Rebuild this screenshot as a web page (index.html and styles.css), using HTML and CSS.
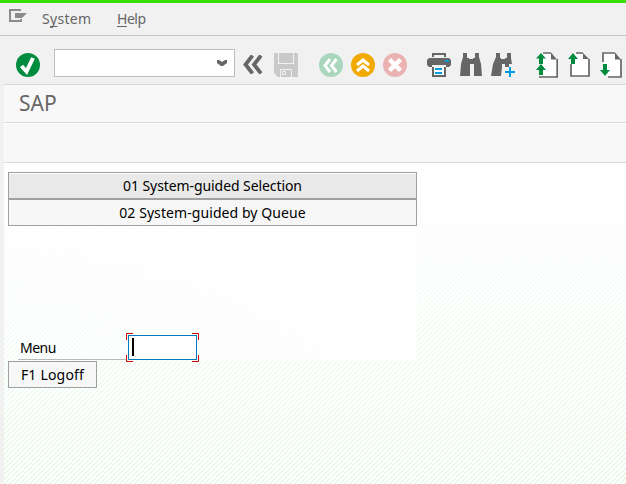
FILE: index.html
```html
<!DOCTYPE html>
<html lang="en">
<head>
<meta charset="utf-8">
<title>SAP</title>
<link rel="stylesheet" href="styles.css">
</head>
<body>
<nav class="menubar">
  <svg class="menu-icon" width="18" height="14" viewBox="0 0 18 14"><path d="M12 1H1v11h11v-2" fill="none" stroke="#8b8b8b" stroke-width="2"/><path d="M6 4h12l-5 5H6z" fill="#8b8b8b"/></svg>
  <span class="system">S<u>y</u>stem</span>
  <span class="help"><u>H</u>elp</span>
</nav>
<main class="window">
  <div class="toolbar">
    <svg class="check" width="24" height="24" viewBox="0 0 24 24"><circle cx="12" cy="12" r="12" fill="#008c3e"/><path d="M5.500 13l5 5.500L17 5" fill="none" stroke="#fff" stroke-width="4"/></svg>
    <div class="command"><svg width="10" height="7" viewBox="0 0 10 7"><path d="M0 0h2l3 2 3-2h2v3L6 6H4L0 3z" fill="#666"/></svg></div>
    <svg class="back" width="20" height="19" viewBox="0 0 20 19"><path d="M9.500 .5L2.500 9.500l7 9M18 .5l-7 9 7 9" fill="none" stroke="#666" stroke-width="3.800"/></svg>
    <svg class="save" width="24" height="24" viewBox="0 0 24 24"><path d="M0 0h4v11h16V0h4v24H4l-4-4z" fill="#c9c9c9"/><path d="M5 0h14v10H5z" fill="#c9c9c9"/><path d="M4.500 0v10.500h15V0M6.500 24v-7.500h11V24" fill="none" stroke="#f1f1f1"/><path d="M8.500 18.500h3v3h-3z" fill="none" stroke="#f1f1f1"/></svg>
    <svg class="exit" width="24" height="24" viewBox="0 0 24 24"><circle cx="12" cy="12" r="12" fill="#a9d6bc"/><path d="M11 6l-5 6.500 5 6.500M17.500 6l-5 6.500 5 6.500" fill="none" stroke="#fff" stroke-width="3"/></svg>
    <svg class="up" width="24" height="24" viewBox="0 0 24 24"><circle cx="12" cy="12" r="12" fill="#f2aa00"/><path d="M6 12l6-5 6 5M6 18l6-5 6 5" fill="none" stroke="#fff" stroke-width="3"/></svg>
    <svg class="cancel" width="24" height="24" viewBox="0 0 24 24"><circle cx="12" cy="12" r="12" fill="#ebb2b2"/><path d="M6.500 6.500l11 11M17.500 6.500l-11 11" stroke="#fff" stroke-width="4.500"/></svg>
    <svg class="print" width="24" height="24" viewBox="0 0 24 24"><path d="M5 4V0h14v4h-2V2H7v2zM2 5h20l2 2v5l-2 2h-3v-2H5v2H2l-2-2V7z" fill="#666"/><path d="M6 14v9h12v-9" fill="#fff" stroke="#666" stroke-width="2"/><path d="M18 7h4v2h-4zM8 15h7v2H8zM8 19h7v2H8z" fill="#009de0"/></svg>
    <svg class="find" width="24" height="24" viewBox="0 0 24 24"><path d="M4 0h4v5h2v1h4V5h2V0h4v4l2 7 1 12h-8V11h-4v12H1l1-12 2-7z" fill="#666"/></svg>
    <svg class="next" width="24" height="26" viewBox="0 0 24 26"><path d="M5 0h4v5h1v1h4V5h2V0h4v5l1 6h-3v3h-4v-3h-3v3l-1 9H0l2-12 3-7z" fill="#666"/><path d="M14 19h10M19 14v10" stroke="#009de0" stroke-width="2"/></svg>
    <svg class="first" width="22" height="26" viewBox="0 0 22 26"><path d="M6 1h9l6 6v17H6z" fill="#fff"/><path d="M7 1h8M21.200 7v18H3" fill="none" stroke="#666" stroke-width="1.700"/><path d="M15 .5l6 7h-6z" fill="#666"/><path d="M5 1L0 6.500h3V12h4V6.500h3zM5 12l-5 6h3v5h4v-5h3z" fill="#008c3e"/></svg>
    <svg class="page-up" width="22" height="26" viewBox="0 0 22 26"><path d="M4 2h11l6 6v16H4z" fill="#fff"/><path d="M8 1h7M21 7v17H3V12" fill="none" stroke="#666" stroke-width="1.700"/><path d="M15 1l6 6h-6z" fill="#666"/><path d="M5 1L0 7h3v5h4V7h3z" fill="#008c3e"/></svg>
    <svg class="page-down" width="22" height="26" viewBox="0 0 22 26"><path d="M3 1h12l6 6v17H3z" fill="#fff"/><path d="M3 10V1h12M21 7v18H8" fill="none" stroke="#666" stroke-width="1.700"/><path d="M15 .5l6 7h-6z" fill="#666"/><path d="M3 12h4v6h3l-5 6-5-6h3z" fill="#008c3e"/></svg>
  </div>
  <h1 class="title">SAP</h1>
  <div class="appbar"></div>
  <section class="screen">
    <div class="panel">
      <button class="option selected">01 System-guided Selection</button>
      <button class="option queue">02 System-guided by Queue</button>
      <div class="field-row">
        <label class="label" for="menu">Menu</label>
        <div class="field"><input id="menu" type="text"><i class="caret"></i>
          <svg class="corners" width="73" height="29" viewBox="0 0 73 29"><path d="M.5 7V.5H7M66 .5h6.500V7M72.500 22v6.500H66M7 28.500H.5V22" fill="none" stroke="#d40000"/></svg>
        </div>
      </div>
    </div>
    <button class="logoff">F1 Logoff</button>
  </section>
</main>
</body>
</html>
```
FILE: styles.css
```css
* { box-sizing: border-box; }
body {
  margin: 0;
  width: 626px;
  height: 484px;
  overflow: hidden;
  background: #f1f1f1;
  font: 14px "Noto Sans", "DejaVu Sans Condensed", sans-serif;
  color: #000;
}
svg { display: block; flex: none; }
button { font: inherit; color: #000; border: 1px solid #a0a0a0; border-radius: 0; }
.menubar {
  display: flex;
  height: 36px;
  border-top: 3px solid #37e100;
  border-bottom: 1px solid #c4c4c4;
  color: #666;
  line-height: 31px;
}
.menubar u { text-underline-offset: 2px; text-decoration-thickness: 1px; text-decoration-skip-ink: none; }
.menu-icon { margin: 6px 0 0 9px; }
.system { margin-left: 15px; width: 75px; letter-spacing: .3px; }
.help { letter-spacing: -.5px; }
.window { margin-left: 4px; height: 448px; display: flex; flex-direction: column; }
.toolbar { display: flex; flex: none; height: 48px; padding: 17px 0 0 12px; }
.command {
  display: flex;
  justify-content: flex-end;
  width: 181px;
  height: 28px;
  margin: -4px 0 0 14px;
  padding: 10px 7px 0 0;
  background: #fff;
  border: 1px solid #bdbdbd;
}
.back { margin: 2px 0 0 8px; }
.save { margin-left: 11px; }
.exit { margin-left: 21px; }
.up, .cancel, .find { margin-left: 8px; }
.print { margin-left: 20px; }
.next { margin-left: 8px; }
.first { margin: -1px 0 0 21px; }
.page-up, .page-down { margin: -1px 0 0 10px; }
.title {
  flex: none;
  height: 38px;
  margin: 0;
  padding-left: 15px;
  border-top: 1px solid #dadada;
  background: #f8f8f8;
  color: #666;
  font-size: 21px;
  font-weight: normal;
  line-height: 37px;
}
.appbar {
  flex: none;
  height: 41px;
  border: solid #dadada;
  border-width: 1px 0;
  background: #f8f8f8;
  box-shadow: inset 1px 1px #fff;
}
.screen {
  flex: 1;
  padding: 9px 0 0 4px;
  background:
    linear-gradient(#fff 0, #ffffff70 60%, #ffffff00 100%),
    repeating-linear-gradient(135deg, #e6f8e6 0 1.768px, #fff 1.768px 3.536px);
}
.panel {
  display: flex;
  flex-direction: column;
  width: 409px;
  height: 189px;
  background: linear-gradient(90deg, #ffffff40, #ffffffd0);
}
.option { height: 27px; padding: 0; background: #f7f7f7; }
.option.selected { background: #e9e9e9; box-shadow: inset 0 1px #fff; letter-spacing: -.08px; }
.queue { letter-spacing: .08px; }
.field-row { display: flex; margin: 109px 0 0 10px; }
.label { width: 109px; height: 25px; padding-left: 2px; border-bottom: 1px solid #b9b9b9; line-height: 25px; letter-spacing: -.5px; }
.field { position: relative; width: 71px; height: 26px; padding-left: 1px; }
.field input { display: block; width: 69px; height: 25px; padding: 0 4px; border: 1px solid #0079bd; border-radius: 0; background: #fff; outline: 0; font: inherit; }
.caret { position: absolute; left: 5px; top: 3px; width: 2px; height: 18px; background: #000; }
.corners { position: absolute; left: -1px; top: -2px; }
.logoff { display: block; width: 89px; height: 27px; padding: 0; background: #f7f7f7; letter-spacing: .2px; }
```
